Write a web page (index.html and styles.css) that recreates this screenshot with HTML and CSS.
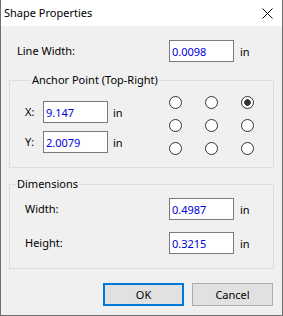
FILE: index.html
```html
<!DOCTYPE html>
<html lang="en">
<head>
    <meta charset="UTF-8">
    <title>Shape Properties</title>
    <link rel="stylesheet" href="styles.css">
</head>
<body>
    <div class="dialog">
        <div class="titlebar">
            <span class="title">Shape Properties</span>
            <span class="close">
                <svg width="11" height="11" viewBox="0 0 11 11"><path d="M0.5 0.5 L10.5 10.5 M10.5 0.5 L0.5 10.5" stroke="#000" stroke-width="1" fill="none"/></svg>
            </span>
        </div>
        <div class="content">
            <div class="row top-row">
                <label class="label wide">Line Width:</label>
                <input class="num" type="text" value="0.0098">
                <span class="unit">in</span>
            </div>

            <fieldset class="group anchor">
                <legend>Anchor Point (Top-Right)</legend>
                <div class="coords">
                    <div class="row">
                        <label class="label short">X:</label>
                        <input class="num" type="text" value="9.147">
                        <span class="unit">in</span>
                    </div>
                    <div class="row">
                        <label class="label short">Y:</label>
                        <input class="num" type="text" value="2.0079">
                        <span class="unit">in</span>
                    </div>
                </div>
                <div class="radios">
                    <input type="radio" name="anchor">
                    <input type="radio" name="anchor">
                    <input type="radio" name="anchor" checked>
                    <input type="radio" name="anchor">
                    <input type="radio" name="anchor">
                    <input type="radio" name="anchor">
                    <input type="radio" name="anchor">
                    <input type="radio" name="anchor">
                    <input type="radio" name="anchor">
                </div>
            </fieldset>

            <fieldset class="group dims">
                <legend>Dimensions</legend>
                <div class="row">
                    <label class="label dim">Width:</label>
                    <input class="num" type="text" value="0.4987">
                    <span class="unit">in</span>
                </div>
                <div class="row">
                    <label class="label dim">Height:</label>
                    <input class="num" type="text" value="0.3215">
                    <span class="unit">in</span>
                </div>
            </fieldset>

            <div class="buttons">
                <button class="btn default">OK</button>
                <button class="btn">Cancel</button>
            </div>
        </div>
    </div>
</body>
</html>
```

FILE: styles.css
```css
body {
    margin: 0;
    font-family: 'Noto Sans', sans-serif;
    font-size: 11px;
    color: #000;
    background-color: #f0f0f0;
}
.dialog {
    width: 283px;
    height: 316px;
    box-sizing: border-box;
    border: 1px solid #6e6e6e;
    border-top: none;
    background-color: #f0f0f0;
}
.titlebar {
    height: 26px;
    display: flex;
    align-items: center;
    justify-content: space-between;
    background-color: #fff;
    padding: 0 9px 0 3px;
}
.title {
    line-height: 16px;
}
.close svg {
    display: block;
}
.content {
    padding: 14px 8px 0 8px;
}
.row {
    display: flex;
    align-items: center;
    height: 22px;
}
.label {
    line-height: 16px;
}
.label.wide {
    width: 160px;
    padding-left: 8px;
    box-sizing: border-box;
}
.label.short {
    width: 18px;
}
.label.dim {
    width: 144px;
}
.num {
    width: 65px;
    height: 22px;
    box-sizing: border-box;
    border: 1px solid #7a7a7a;
    background-color: #fff;
    padding: 0 2px;
    margin: 0;
    font-family: inherit;
    font-size: 11px;
    color: #0000dd;
    outline: none;
}
.unit {
    margin-left: 6px;
}
.group {
    margin: 0;
    border: 1px solid #dcdcdc;
    padding: 0;
}
.group legend {
    padding: 0 1px;
    margin-left: 6px;
    line-height: 16px;
}
.anchor {
    margin-top: 10px;
    display: flex;
    padding: 8px 19px 12px 15px;
}
.anchor .coords {
    display: flex;
    flex-direction: column;
    gap: 8px;
    padding-top: 5px;
}
.anchor .unit {
    margin-left: 5px;
}
.radios {
    margin-left: auto;
    display: grid;
    grid-template-columns: repeat(3, 13px);
    grid-auto-rows: 13px;
    column-gap: 23px;
    row-gap: 10px;
}
.radios input {
    appearance: none;
    -webkit-appearance: none;
    width: 13px;
    height: 13px;
    margin: 0;
    box-sizing: border-box;
    border: 1px solid #333;
    border-radius: 50%;
    background-color: #fff;
}
.radios input:checked {
    background: radial-gradient(circle, #333 0 3px, #fff 3.5px);
}
.dims {
    margin-top: 8px;
    display: flex;
    flex-direction: column;
    gap: 12px;
    padding: 6px 0 14px 0;
}
.dims .row {
    padding-left: 15px;
}
.buttons {
    display: flex;
    justify-content: flex-end;
    gap: 8px;
    margin-top: 14px;
    padding-right: 1px;
}
.btn {
    width: 81px;
    height: 23px;
    box-sizing: border-box;
    border: 1px solid #adadad;
    background-color: #e1e1e1;
    font-family: inherit;
    font-size: 11px;
    color: #000;
    padding: 0;
    margin: 0;
}
.btn.default {
    border: 2px solid #0078d7;
}
```
